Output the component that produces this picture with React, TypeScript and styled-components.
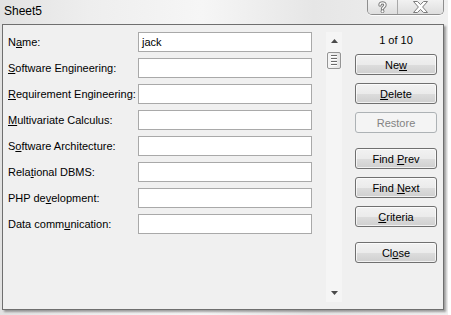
import styled, { createGlobalStyle } from 'styled-components';

const GlobalStyle = createGlobalStyle`
  html, body {
    margin: 0;
    padding: 0;
    background: #ffffff;
  }
`;

type Keyed = { text: string; at: number };

const fields: (Keyed & { value?: string })[] = [
  { text: 'Name:', at: 1, value: 'jack' },
  { text: 'Software Engineering:', at: 0 },
  { text: 'Requirement Engineering:', at: 0 },
  { text: 'Multivariate Calculus:', at: 0 },
  { text: 'Software Architecture:', at: 1 },
  { text: 'Relational DBMS:', at: 4 },
  { text: 'PHP development:', at: 6 },
  { text: 'Data communication:', at: 9 },
];

const actions: (Keyed & { space: number; disabled?: boolean })[] = [
  { text: 'New', at: 2, space: 6 },
  { text: 'Delete', at: 0, space: 8 },
  { text: 'Restore', at: -1, space: 8, disabled: true },
  { text: 'Find Prev', at: 5, space: 15 },
  { text: 'Find Next', at: 5, space: 8 },
  { text: 'Criteria', at: 0, space: 8 },
  { text: 'Close', at: 2, space: 15 },
];

const AccessKey = ({ text, at }: Keyed) => {
  if (at < 0) return <>{text}</>;
  return (
    <>
      {text.slice(0, at)}
      <u>{text[at]}</u>
      {text.slice(at + 1)}
    </>
  );
};

export default function App() {
  return (
    <>
      <GlobalStyle />
      <Window>
        <TitleBar>
          <Title>Sheet5</Title>
          <Caption>
            <CaptionButton $w={29}>
              <svg width="9" height="12" viewBox="0 0 9 12">
                <path d="M2 4 C2 1.2 7 1.2 7 4 C7 6 4.5 6 4.5 8" fill="none" stroke="#7c7c7c" strokeWidth="3.4" strokeLinecap="round" />
                <path d="M2 4 C2 1.2 7 1.2 7 4 C7 6 4.5 6 4.5 8" fill="none" stroke="#ffffff" strokeWidth="1.4" strokeLinecap="round" />
                <circle cx="4.5" cy="10.3" r="1.5" fill="#ffffff" stroke="#7c7c7c" strokeWidth="1" />
              </svg>
            </CaptionButton>
            <CaptionButton $w={45} $last>
              <svg width="15" height="12" viewBox="0 0 15 12">
                <polygon
                  points="0.5,0.5 4.5,0.5 7.5,3.6 10.5,0.5 14.5,0.5 9.6,6 14.5,11.5 10.5,11.5 7.5,8.4 4.5,11.5 0.5,11.5 5.4,6"
                  fill="#ffffff"
                  stroke="#7c7c7c"
                  strokeWidth="1"
                  strokeLinejoin="round"
                />
              </svg>
            </CaptionButton>
          </Caption>
        </TitleBar>
        <Frame>
          <Form>
            {fields.map((f) => (
              <Row key={f.text}>
                <Label>
                  <AccessKey text={f.text} at={f.at} />
                </Label>
                <Field>{f.value}</Field>
              </Row>
            ))}
          </Form>
          <ScrollBar>
            <Arrow>
              <svg width="7" height="4" viewBox="0 0 7 4">
                <polygon points="0,4 3.5,0 7,4" fill="#4a4a4a" />
              </svg>
            </Arrow>
            <Thumb>
              <Grip />
              <Grip />
              <Grip />
              <Grip />
            </Thumb>
            <Track />
            <Arrow>
              <svg width="7" height="4" viewBox="0 0 7 4">
                <polygon points="0,0 7,0 3.5,4" fill="#4a4a4a" />
              </svg>
            </Arrow>
          </ScrollBar>
          <Side>
            <Counter>1 of 10</Counter>
            {actions.map((a) => (
              <ActionButton key={a.text} $space={a.space} disabled={a.disabled}>
                <AccessKey text={a.text} at={a.at} />
              </ActionButton>
            ))}
          </Side>
        </Frame>
      </Window>
    </>
  );
}

const Window = styled.div`
  width: 448px;
  height: 315px;
  background: linear-gradient(90deg, #e2e2e2 0%, #eeeeee 20%, #f6f6f6 45%, #e6e6e6 70%, #f0f0f0 100%);
  font-family: 'Liberation Sans', Arial, sans-serif;
`;

const TitleBar = styled.div`
  height: 24px;
  display: flex;
  align-items: flex-start;
  justify-content: space-between;
`;

const Title = styled.div`
  padding: 4px 0 0 4px;
  font-size: 12px;
  color: #000;
`;

const Caption = styled.div`
  display: flex;
  margin-right: 4px;
  margin-top: -1px;
  border: 1px solid #8e8e8e;
  border-top: none;
  border-radius: 0 0 5px 5px;
  overflow: hidden;
  box-shadow: 0 1px 0 rgba(255, 255, 255, 0.8);
`;

const CaptionButton = styled.div<{ $w: number; $last?: boolean }>`
  width: ${(p) => p.$w}px;
  height: 15px;
  display: flex;
  align-items: center;
  justify-content: center;
  background: linear-gradient(#f3f3f3, #e6e6e6 60%, #dedede);
  border-right: ${(p) => (p.$last ? 'none' : '1px solid #a8a8a8')};
`;

const Frame = styled.div`
  margin-left: 2px;
  width: 442px;
  height: 286px;
  box-sizing: border-box;
  border: 1px solid #6f6f6f;
  background: #f0f0f0;
  box-shadow: 2px 2px 2px rgba(0, 0, 0, 0.35);
  display: flex;
  align-items: flex-start;
  padding: 7px 0 0 5px;
`;

const Form = styled.div`
  display: flex;
  flex-direction: column;
  gap: 6px;
`;

const Row = styled.div`
  display: grid;
  grid-template-columns: 130px 174px;
  align-items: center;
`;

const Label = styled.div`
  font-size: 11px;
  color: #000;
  white-space: nowrap;

  u {
    text-underline-offset: 1px;
  }
`;

const Field = styled.div`
  height: 20px;
  box-sizing: border-box;
  border: 1px solid #a9a9a9;
  background: #ffffff;
  font-size: 11px;
  line-height: 18px;
  padding-left: 3px;
  color: #000;
`;

const ScrollBar = styled.div`
  margin-left: 14px;
  width: 16px;
  height: 270px;
  background: #f5f5f5;
  display: flex;
  flex-direction: column;
  align-items: center;
`;

const Arrow = styled.div`
  height: 18px;
  width: 16px;
  display: flex;
  align-items: center;
  justify-content: center;
`;

const Thumb = styled.div`
  margin-top: 2px;
  width: 14px;
  height: 17px;
  box-sizing: border-box;
  border: 1px solid #959595;
  border-radius: 2px;
  background: linear-gradient(90deg, #f6f6f6, #e4e4e4);
  display: flex;
  flex-direction: column;
  align-items: center;
  justify-content: center;
  gap: 1px;
`;

const Grip = styled.div`
  width: 6px;
  height: 1px;
  background: #6b6b6b;
  border-bottom: 1px solid #ffffff;
`;

const Track = styled.div`
  flex: 1;
`;

const Side = styled.div`
  margin-left: 13px;
  width: 82px;
  display: flex;
  flex-direction: column;
`;

const Counter = styled.div`
  height: 16px;
  line-height: 16px;
  text-align: center;
  font-size: 11px;
  color: #000;
`;

const ActionButton = styled.button<{ $space: number }>`
  margin-top: ${(p) => p.$space}px;
  height: 21px;
  width: 82px;
  padding: 0;
  box-sizing: border-box;
  border: 1px solid #707070;
  border-radius: 3px;
  background: linear-gradient(#f2f2f2 0%, #ebebeb 50%, #dddddd 51%, #cfcfcf 100%);
  box-shadow: inset 0 0 0 1px rgba(255, 255, 255, 0.7);
  font-family: 'Liberation Sans', Arial, sans-serif;
  font-size: 11px;
  color: #000;
  text-align: center;

  &:disabled {
    border-color: #adb2b5;
    background: #f4f4f4;
    box-shadow: none;
    color: #838383;
  }
`;
